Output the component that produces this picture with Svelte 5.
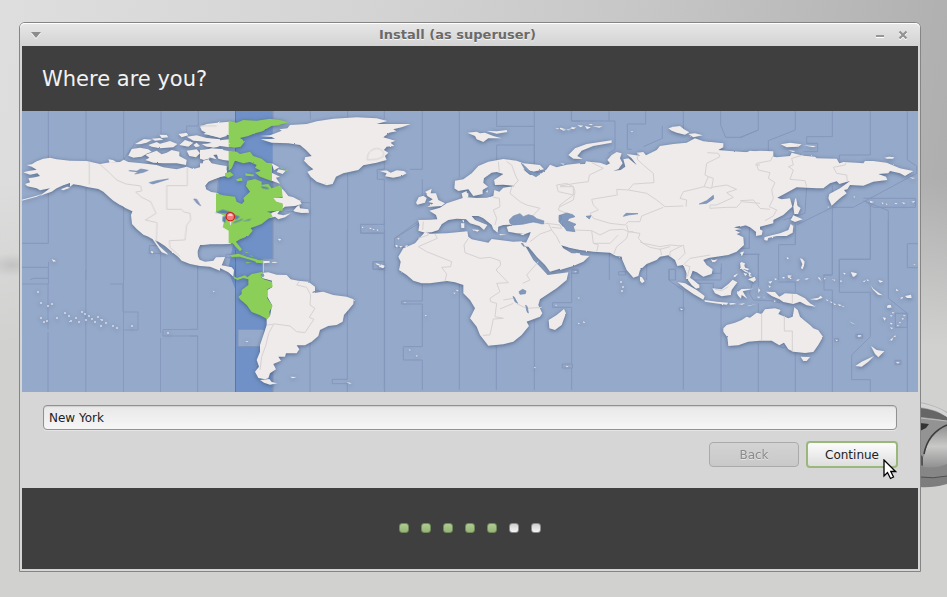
<script>
  let city = $state('New York');
  const steps = 7;
  const current = 5;

  // Map sheets: each has its own origin; shapes are in thirds of a map unit.
  const sheets = [
    {
      x: 20, y: 110,
      land: [
        'M20 165L35 163 50 154 70 146 90 143 110 148 150 152 200 153 240 162 270 157 300 156 311 149 325 156 350 158 385 162 410 165 430 172 470 178 500 170 520 177 545 170 550 152 565 148 575 160 600 165 620 168 620 198 600 200 585 207 565 215 555 228 560 243 580 248 595 250 595 402 570 403 540 405 533 418 532 435 540 452 555 458 580 455 600 452 600 482 570 470 540 468 510 462 485 452 474 440 455 425 435 408 415 395 405 391 420 410 440 428 445 434 425 427 410 405 398 388 385 380 370 374 350 357 336 342 333 315 338 302 325 294 300 285 280 272 268 262 250 245 235 237 205 232 180 226 160 223 150 230 150 219 130 226 110 235 95 245 75 252 60 258 72 248 90 235 60 241 50 235 22 229 15 222 30 217 25 205 45 202 60 198 52 190 30 194 10 187 25 183 50 179 35 170Z',
        'M5 269L50 257 72 250 50 260 5 272Z',
        'M325 137L335 117 360 113 385 118 395 125 380 131 365 140 340 143Z',
        'M376 150L388 143 376 134 410 122 425 133 440 128 455 120 478 125 478 138 500 150 498 165 470 160 430 160 400 158Z',
        'M345 102L372 87 396 89 380 98 360 103Z', 'M385 105L410 96 420 101 450 93 472 102 460 112 420 115 395 110Z',
        'M418 74L440 75 445 82 425 84ZM395 86L420 84 430 89 405 92Z', 'M475 72L500 68 505 76 485 82ZM478 105L495 90 520 98 505 110ZM520 105L530 98 540 108 528 112Z',
        'M500 122L530 118 540 130 528 142 508 138Z', 'M500 80L530 76 560 84 600 88 600 98 560 95 520 92Z', 'M543 60L570 48 620 38 620 78 600 84 570 76Z', 'M545 122L575 115 610 118 605 132 580 135 590 148 565 142Z', 'M545 102L580 100 602 106 590 112 560 110Z',
        'M95 448l8 2 5 4-8 1zM80 442l5 1zM68 439l4 1zM393 423l7 2-1 5-5-1z', 'M245 238l12 3 14 12 10 12-12-4-12-12zM300 283l25 6 20 12-5 4-24-11z', 'M265 148l14 2 10 6-20 3z', 'M122 238l20-8 8 3-20 8z'
      ],
      border: ['M208 155V223', 'M240 163L270 190 290 210 318 222 362 228 365 243 347 246 365 262 392 275 408 310 376 330 411 338 409 395', 'M502 172V227H440V298H484L492 306 510 310 512 330 500 345 495 390 448 392 450 412 480 440'],
      lake: ['M327 182L350 184 362 177 384 181 370 187 345 192 355 185Z', 'M388 218L410 212 445 207 420 215 398 222Z', 'M521 267L530 268 542 288 530 279Z'],
      zone: ['M85 0V145', 'M85 250V400H0', 'M0 472H85V510', 'M198 0V150', 'M198 233V510', 'M311 148V0', 'M311 290V510', 'M345 100L311 149', 'M423 0V74', 'M535 0V48H500V75', 'M422 425V510', 'M388 407V430H420', 'M388 407H420', 'M533 460V510', 'M30 510L40 505H85']
    },
    {
      x: 200, y: 110,
      land: [
        'M0 160L20 161 40 168 60 172 82 182 76 196 55 203 30 210 15 225 18 238 35 247 50 248 50 305 92 310 92 402 60 403 30 402 0 405Z',
        'M0 50L20 42 50 38 88 35 88 76 70 72 60 82 30 76 10 72 25 64 5 60Z', 'M0 88L30 86 45 92 88 88 88 112 60 108 40 113 10 104 35 99Z', 'M50 132L70 120 88 124 88 152 70 150 55 146Z', 'M0 120L25 118 38 126 20 132 30 145 12 150 0 146Z',
        'M180 78L210 76 230 68 245 62 238 58 262 55 270 45 320 42 350 34 400 26 470 22 530 25 562 33 530 42 590 42 632 42 605 52 580 58 590 64 568 68 550 82 586 92 572 98 583 108 560 110 552 120 565 128 555 138 560 150 530 158 490 166 475 180 430 190 408 200 398 222 380 226 350 215 332 200 322 185 340 178 325 166 312 152 315 142 335 138 318 120 300 105 265 100 215 98 182 88 225 86 215 81Z',
        'M540 183L560 181 552 176 572 188 590 181 612 183 620 190 605 198 580 203 555 199 560 190Z',
        'M218 262L248 264 236 226 255 245 265 258 280 262 300 272 305 282 285 288 255 290 245 298 248 285 235 278 220 272Z', 'M280 302L290 290 298 285 300 295 325 298 327 308 305 309 285 305Z', 'M215 308L240 300 232 312 250 316 272 310 255 322 235 328 225 320 205 325Z',
        'M215 160L238 172 222 181ZM235 178L257 182 248 192 230 186ZM215 188L240 200 228 203 240 221 215 212Z',
        'M188 453L208 453 210 458 190 460ZM215 456L233 457 218 459Z', 'M235 386l7 1 0 4-6-1zM485 350l6 1-4 4zM507 353l9 1-5 4zM517 356l8 2-5 2zM530 358l6 2-4 3zM592 384l7 1-4 4zM586 405l6 0 1 7-4 0zM598 408l10 1-6 4zM614 408l10-3-5 7zM528 463l8-2 5 4-7 1zM542 463l12 4-5 7-7-3z'
      ],
      pick: [
        'M86 32L110 38 130 30 170 32 210 26 240 30 266 37 236 45 250 45 215 48 200 56 188 64 165 70 145 78 120 84 135 94 122 110 105 113 86 110Z',
        'M86 122L110 125 120 132 150 125 160 138 185 146 200 158 216 160 216 214 200 208 180 200 165 188 182 182 165 173 170 165 150 156 130 160 105 152 95 175 86 182Z',
        'M75 190L90 185 101 195 85 204 75 199ZM108 208L125 203 128 212 112 214ZM135 190l28 4-4 5-22-2z',
        'M48 250L70 256 105 260 110 275 125 282 133 274 130 264 150 245 138 228 142 212 165 207 185 215 185 224 205 222 215 235 232 228 245 230 248 262 220 264 230 276 248 280 248 302 230 302 200 305 212 308 218 320 205 326 185 342 170 348 152 354 158 362 145 378 120 388 108 395 118 408 126 418 120 424 108 412 98 400 86 400 86 362 68 352 72 336 74 318 48 306Z',
        'M90 436L115 431 140 440 165 446 186 454 180 459 150 449 120 440 95 441ZM138 456L156 458 140 460ZM165 452L188 450 188 460 168 458ZM240 172l12 2-8 2zM258 178l8 2-6 4z'
      ],
      border: ['M502 150Q500 120 530 115 555 118 550 140L530 148Z', 'M0 48H50'],
      deep: ['M45 308L68 299 95 306 80 311 60 309Z', 'M68 318L79 320 76 338 67 334Z', 'M98 312L120 320 108 330 102 322Z', 'M98 338L130 325 124 331 104 339Z', 'M126 334L154 326 148 332Z', 'M183 228l20 4 4 6-20-3z'],
      zone: ['M331 0V28', 'M331 205V510', 'M443 0V22', 'M443 190V510', 'M553 0V25', 'M553 110V178H532V208H553V343H482V369H553V510', 'M218 0V28', 'M218 217V447H188L192 488', 'M305 278H330', 'M240 290H300V305H260', 'M584 385L660 338', 'M584 385V412H625', 'M553 455H519V478H553', 'M78 433H130V443H78Z', 'M76 188L55 205V245']
    },
    {
      x: 190, y: 230,
      land: [
        'M0 0L117 0 117 42 95 41 60 40 30 45 22 65 25 88 45 95 70 92 78 82 105 81 98 100 95 106 125 112 132 120 130 140 115 127 85 112 50 107 0 98Z',
        'M220 128L235 127 260 134 290 135 302 148 325 152 355 155 375 170 375 188 400 185 430 195 470 200 491 208 490 222 475 240 462 255 458 275 440 285 415 288 390 300 385 318 365 335 345 346 320 346 328 358 320 370 288 370 285 380 265 380 273 392 250 402 258 418 240 430 235 445 225 448 205 444 195 425 207 410 200 390 210 365 210 345 222 310 230 285 230 265 240 258 246 225 232 200 232 180 246 172 246 152 218 145 208 135Z',
        'M210 450L238 447 245 456 262 460 240 464 222 458Z',
        'M265 26l7 2-4 4zM68 182l7 2-4 2zM300 440l20 1-12 4zM470 456l16 4-8 1zM556 100l8 0-3 3zM566 106l18 2-4 6-12-3zM249 95l14 1-8 3zM280 105l3 2zM297 120l3 2zM166 333l10 1-5 3z'
      ],
      pick: [
        'M130 137L140 144 165 136 172 142 185 132 215 126 221 129 212 140 222 148 246 155 248 170 232 178 232 205 248 228 238 245 240 258 232 268 210 256 185 246 170 225 150 208 145 200 155 192 155 180 175 165 175 148 160 144 142 150 132 145Z',
        'M165 65l12 4-8 0zM178 75l15 5-10-1z'
      ],
      border: ['M232 285L255 282 300 288 320 305 345 308 360 285 372 268 358 262 375 235 360 225 362 195 350 172 320 165 328 154', 'M250 284L236 310 228 345 215 380 210 420', 'M220 92V128'],
      lake: ['M213 134l7-2 2 6-6 3z', 'M368 187l16-7 5 4-14 2z'],
      zone: ['M0 298H23V110', 'M0 318H23V495', 'M248 390V495', 'M360 155V165', 'M360 335V495', 'M472 240V448H427V461H472V495', 'M584 0V10H512V0', 'M584 10V495', 'M584 95H549V118H584', 'M472 0V200', 'M360 0V155', 'M193 398l8 6-6 12 8 8-10 8 14 14 20 8 20 8']
    },
    {
      x: 360, y: 110,
      land: [
        'M175 330L210 329 232 328 228 315 208 302 240 293 260 280 290 270 308 264 305 250 320 243 322 262 350 264 380 263 400 258 403 240 418 245 430 233 465 228 430 224 405 225 402 210 430 192 410 186 395 188 372 205 370 218 384 230 368 240 368 252 340 258 325 238 295 243 283 235 285 212 310 208 335 190 355 168 385 155 430 147 470 152 490 160 540 165 552 178 520 185 490 178 510 195 545 190 560 178 570 164 590 172 620 164 660 160 660 418 625 412 600 400 610 415 635 430 660 430 660 457 620 470 570 485 555 465 530 440 505 410 485 401 498 398 508 378 512 366 495 372 470 370 445 365 440 350 460 345 500 342 450 344 430 345 415 350 413 368 400 358 395 345 370 325 355 318 335 318 345 330 382 345 372 360 358 348 330 340 318 328 290 326 265 330 245 343 235 360 215 367 195 368 175 362 178 345Z',
        'M196 245L215 236 212 250 228 250 235 270 255 280 245 288 202 291 220 280 205 276 218 268 202 258Z', 'M168 278L176 262 190 257 200 264 195 278 172 284Z',
        'M322 68L350 65 360 70 375 68 400 78 425 85 400 85 385 85 370 96 350 88 345 78Z', 'M378 62L410 64 440 60 442 66 410 71Z',
        'M335 358L358 360 352 365ZM303 340h10v14h-9zM306 331h6v7zM418 372l22 2-20 2zM480 373l18-4-8 7zM313 248l12 2 0 12-8 0z', 'M450 57l10 2zM478 57l14 2zM585 53l14 3-6 2zM600 56l20 3-10 3zM626 56l24-4-10 5zM385 118l3 0zM190 211l4 2zM229 224l5 1zM173 145l9 1z', 'M378 245l6-6-2 9z'
      ],
      lake: ['M450 340L448 330 460 318 480 311 490 320 505 314 520 318 530 326 552 333 550 342 520 336 490 342 460 345Z', 'M484 160l14 24 30 16 12-8-30-8-18-18z'],
      border: ['M415 155L418 185', 'M440 155L455 165 468 200 475 212 455 232 450 250 480 275 500 285 540 295 520 315', 'M400 262L418 265 420 290 400 300 410 325 405 345', 'M190 335L188 360', 'M200 365L205 375 175 385', 'M540 342L565 340 575 360 540 372 510 395', 'M590 225L620 220 640 230 640 255 595 245Z', 'M640 255L600 285 595 300 620 310', 'M575 360L590 380 600 400', 'M560 340L600 345 605 355 575 352'],
      zone: ['M298 0V202', 'M187 0V178H150', 'M187 208V260', 'M410 0V49H523', 'M410 150V105H523V165', 'M523 0V165', 'M635 0V33H660', 'M104 385L172 335', 'M655 487V478H635', 'M400 225L480 227']
    },
    {
      x: 380, y: 220,
      land: [
        'M105 70L118 55 135 36 150 41 200 40 262 34 265 50 275 58 325 68 335 57 400 65 425 64 440 85 460 120 480 140 503 165 565 157 560 180 530 205 480 238 475 255 487 280 480 290 440 305 447 318 425 345 400 365 370 373 325 377 300 345 290 320 270 295 285 265 270 240 250 220 250 195 225 187 200 183 150 190 125 190 100 182 80 165 57 150 62 125 55 110 70 85Z',
        'M424 65L440 68 443 82 436 78Z', 'M552 267L558 280 545 315 525 330 508 325 506 300 530 285Z',
        'M228 209l8 2-5 3zM220 218l7 0-4 4zM71 247l8 1-4 2zM134 285l7 1-4 3zM86 388l7 2-4 2zM107 406l7 1-4 3zM461 441l8 2-5 2zM557 437l9 2-5 3zM526 254l6 1-4 3zM593 232l7 2-4 2zM593 308l7 2-4 3zM609 304l7 3-5 3zM583 154l8 1-5 2z'
      ],
      lake: ['M417 215L428 208 438 213 436 221 420 223Z', 'M399 229L403 232 413 250 405 245Z', 'M437 255l5 6 3 18-4-4z', 'M424 70l4 6 5 4-4-9z'],
      border: ['M165 42L172 55 115 80 140 95 215 125 212 140 185 142 200 162 195 184', 'M265 55L252 75 255 98 300 115 330 112 360 122 362 135 348 150 385 188 350 190 360 215 330 235 332 245 350 250 345 290 370 295 340 297 330 345 308 346', 'M475 125L440 165 450 180 428 190', 'M370 240L400 235', 'M360 267L400 250', 'M412 252L440 265 485 262', 'M440 265L445 280'],
      zone: ['M13 0V510', 'M127 190V243H65V252H127V380H70V420H127V510', 'M238 190V510', 'M349 378V510', 'M463 300V510', 'M575 150V248H518V262H575V432', 'M547 432H577V444H547Z', 'M575 444V510', 'M580 150H595V160H575']
    },
    {
      x: 560, y: 110,
      land: [
        'M0 170L30 168 50 163 75 162 78 154 95 156 120 158 140 165 150 160 142 150 155 135 170 126 185 130 180 145 188 160 175 178 160 182 182 180 196 170 190 148 205 145 230 165 215 145 200 132 240 137 230 128 250 126 258 136 290 120 300 108 340 102 380 98 405 85 430 94 490 100 490 112 475 120 500 122 560 127 600 122 640 124 640 340 600 350 600 375 570 352 555 345 522 352 545 358 525 360 540 368 530 372 550 382 552 405 530 425 505 435 470 440 445 444 430 450 440 465 458 478 455 492 430 500 410 487 398 482 388 510 378 508 380 490 370 465 352 468 345 450 325 436 300 440 290 450 260 462 240 480 235 498 220 503 200 480 187 450 185 440 168 438 150 428 100 425 60 420 35 415 0 405Z',
        'M0 430L20 430 40 440 50 428 65 436 88 438 70 455 40 468 0 480Z',
        'M25 135L45 115 80 102 155 91 155 98 100 108 65 122 52 138 68 147 40 146Z', 'M325 55L340 50 360 48 372 58 388 67 375 74 350 68 335 62Z', 'M385 72L405 70 428 76 400 82Z',
        'M0 53l15 2-15 3zM32 50l14 3-6 5zM52 45l18 2-8 5zM75 48l18 4-12 6zM85 42l14 0-6 4zM98 49l30 0-10 4zM20 57l14 3-10 1zM0 160l14 1-4 3zM212 64l8 0-4 3zM235 51l8 1z', 'M240 500l6 2 8 12-8 6-6-8zM545 425l6 3-8 10zM452 448l14 4-8 5z', 'M540 458l8 0 8 15 12 4-5 4-20-6zM563 485l10 5-4 8zM520 498l14-8-8 10zM350 490l1 10z'
      ],
      lake: ['M0 316L20 309 38 314 45 320 28 325 22 332 48 343 40 350 45 365 20 362 8 345Z', 'M-3 316H3V335L10 350 -3 335Z', 'M418 282L440 272 460 256 461 266 440 280Z', 'M190 319L198 310 234 311 205 315Z', 'M78 319l15-2-5 10z'],
      border: ['M95 158L130 175 88 195 85 215 45 220 0 228', 'M0 230L40 230 45 245 40 270 0 290', 'M235 130L232 148 250 165 280 190 282 218 220 222 205 240 170 238 172 255 95 268 100 285 115 300 90 310 100 325 150 340 195 345 205 335 240 335 245 318 310 292', 'M205 240L260 250 290 270 315 290 370 288', 'M442 128L475 130 480 140 440 160 435 195 445 200 432 230 400 238 370 245 360 265 380 270 378 290', 'M432 230L455 235 460 205 445 200', 'M455 232L500 225 530 238 500 248 520 262 470 285 450 285 450 295 500 292 530 292 545 275 600 280', 'M40 360L95 362 120 375 150 360 190 358 205 365 220 365', 'M95 362L100 400 115 405 110 425', 'M100 400L150 400 175 375', 'M200 345L205 365 240 370 235 385 250 400 300 410 330 405 365 408', 'M160 435L170 410 200 385 205 365', 'M300 415L305 435', 'M330 440L330 425 370 405 375 430 355 450', 'M240 395L270 412 300 418 330 410', 'M370 465L390 445 420 440 450 435', 'M375 465L390 470 382 500', 'M585 165H600'],
      zone: ['M34 0V33H165V118L145 130', 'M147 0V33', 'M257 0V42H202V118H215', 'M250 110L307 85V48', 'M370 0V60', 'M482 0V45L497 82H540L595 60', 'M568 350V415H540', 'M540 433H600', 'M148 428V510', 'M35 480H52V490H35ZM176 485H197V495H176Z', 'M328 510V478H346V510', 'M260 465V510', 'M484 460V490H430']
    },
    {
      x: 740, y: 110,
      land: [
        'M0 128L20 127 30 122 65 125 75 147 92 138 110 142 150 138 155 128 190 137 225 140 230 145 290 146 298 160 310 156 350 158 370 160 375 153 400 153 440 158 480 175 520 183 505 192 495 198 480 190 450 183 445 190 415 192 438 200 442 210 400 215 370 227 330 225 322 238 312 240 320 250 300 265 275 287 265 265 268 252 300 235 330 213 298 222 290 214 270 220 250 235 230 235 170 232 140 248 112 263 125 268 150 265 157 290 130 315 100 330 75 335 45 350 68 362 65 375 48 378 48 362 35 350 20 345 0 350Z',
        'M165 268L168 263 173 288 182 294 174 312 163 312 160 290Z', 'M160 316L188 328 165 336 152 330Z', 'M152 342L160 348 158 368 140 378 110 378 85 384 82 392 73 390 73 382 95 376 120 370 145 360Z',
        'M122 103L150 98 185 103 175 110 140 112ZM190 106L228 108 220 112ZM145 121l22 2-8 3zM433 143l14-3 16 2-4 4-18 0z', 'M389 272l13 4-10 3zM425 277l6 2-4 4zM437 280l6 3-4 2zM463 279l10 0-5 4zM485 277l12 2-6 3zM514 275l12-3-6 6zM508 202l18 2-8 2zM262 290l6 0-3 3zM340 259l6 1-3 3zM190 328l5-2zM200 323l5-2zM210 319l5-2z', 'M180 445l7 2 7 8-2 12-5 12-4-6 4-10zM140 443l6 1-3 3zM128 503l6 1zM142 497l12 4-8 4zM234 502l8 2-4 3zM310 489l6 1-3 4zM333 488l18 4-8 8zM520 462l7 2-4 2zM160 507l8 1zM250 508l10 2zM280 502l6 4z'
      ],
      border: ['M98 138L92 152 50 160 55 180 90 188 85 205 105 218 95 240 100 265 88 290 110 300 100 318 75 332', 'M0 272L40 270 60 295 90 298', 'M190 135L155 145 160 165 145 170 160 180 150 208 195 212 200 230', 'M280 172L315 165 318 158', 'M280 172L290 190 320 195 322 215'],
      zone: ['M55 0V60L0 84', 'M166 0V60L85 92V138', 'M277 0V80H200V100H233V125H190', 'M391 0V135H298V148', 'M502 0V150L530 168V190L340 292H277L170 345', 'M277 228V495H250', 'M370 272L445 302V510', 'M526 265V292H400L375 272M370 265H526', 'M391 285V448H298V510', 'M166 380V404H116V510', 'M28 380V415H0', 'M55 510V433H0', 'M534 401H502V473H534', 'M200 225L195 310 130 330', 'M166 268V318']
    },
    {
      x: 660, y: 220,
      land: [
        'M190 325L200 315 225 308 245 300 260 290 270 293 290 278 305 282 315 268 345 265 362 270 355 282 385 295 398 290 403 262 413 270 420 290 435 303 450 315 460 325 475 331 489 350 475 375 460 396 435 399 400 395 385 388 372 368 358 376 335 362 300 362 265 365 235 376 205 378 202 352 190 335Z',
        'M422 410L450 411 440 423 430 423Z', 'M633 378L650 390 673 394 655 412 645 402Z', 'M642 408L625 425 605 440 586 438 605 425Z',
        'M318 215L345 216 358 230 375 220 410 222 435 235 450 250 467 260 440 256 420 245 400 252 370 246 358 238 335 228Z', 'M450 238L475 233 482 227 488 233 470 240Z',
        'M157 205L185 208 205 192 218 179 232 187 215 210 212 225 185 229 165 220Z', 'M52 186L75 190 110 210 134 228 130 239 100 222 75 205Z', 'M133 240L170 245 205 248 200 254 165 250 135 245Z', 'M230 218L245 207 280 206 248 214 262 236 245 225 243 236 235 228Z', 'M78 140L88 150 86 170 100 180 118 195 118 203 108 206 95 195 82 178Z',
        'M243 126L255 130 250 148 265 156 275 162 255 155 242 145ZM250 158l12 4-6 6zM265 165l12 3-7 3zM264 178l20-8 4 10-8 6zM240 98l12-4-6 14zM155 122l18-4-9 9z', 'M220 170l14-9-10 10zM208 250l12-1 10 3-20 2zM235 252l20-2-8 4zM262 258l26-6-22 7zM295 205l6 6-6 8zM325 185l12-2-6 8zM325 196l8 4-5 3zM290 230l12 0-6 4zM310 230l8 2-5 2zM340 241l8 2-5 3z',
        'M498 238l8 3-5 2zM510 244l8 3-5 2zM520 250l9 3-6 2zM534 252l12 4-8 2zM546 258l8 2-5 2zM568 304l20 10-12-4zM585 282l8 4zM594 346l10 0-3 4-7 0zM526 359l8 1-4 4zM60 266l9 1-4 4zM708 426l10 1-4 4z', 'M343 175l8 2-5 4zM366 171l8 0-2 5zM382 165l14 2-6 4zM388 173l8 2-5 3zM408 180l12-3-7 6zM432 177l15-3-6 5zM473 172l6 2 6 10-7-6zM492 173l5 2-3 4zM520 178l6 2-4 3zM540 181l7 2-5 4zM550 158l8 2-5 3zM573 156l18 4-12 12zM608 184l10-3-5 5zM620 178l8 3-6 2zM655 180l15 4-10 4zM632 196l8 10 16 12 12 8-14-2-16-16zM708 206l8 6-7 1zM720 234l10-4-4 7zM735 228l18-4 2 10-14 0zM742 252l12 4zM680 258l8-4 8 8-10 2zM668 292l10 2-4 8zM690 285l8 2-5 3zM695 277l8 0-4 4zM730 284l8 4-7 1zM725 294l8 2-6 3zM718 305l6 4-6 1zM712 314l6 4-6 1zM690 308l8 2-5 4zM690 322l10 2-6 3zM690 360l10-8-4 10zM700 350l6-4 1 5zM380 112l7 2-4 4z'
      ],
      border: ['M305 280V361', 'M373 288V333H397V395', 'M397 222V250', 'M165 208L185 212 205 200'],
      lake: ['M358 378l14-6 4 10-10 2z'],
      zone: ['M26 148V180L70 212V510', 'M26 148H47V180H26', 'M183 145V180H90', 'M183 255V525', 'M295 250V275', 'M295 370V525', 'M406 72V10', 'M406 400V525', 'M517 0V165H492V210H517V525', 'M355 186H406V215', 'M631 118H538V217H631V350L575 405V479H631V525', 'M685 235L742 280V525', 'M706 280H742V322H706Z', 'M685 0V235', 'M588 343H608V354H588ZM705 421H723V433H705ZM58 263H72V272H58ZM524 356H536V364H524Z', 'M280 180L268 220 280 240 330 242 360 248', 'M103 190H160V205', 'M295 103V200', 'M631 0V118']
    }
  ];

  // Small Polynesian islands
  const specks = [[41,303],[48,306],[52,304],[41,318],[44,322],[47,321],[65,313],[69,316],[71,321],[76,318],[82,312],[85,314],[89,316],[86,320],[92,319],[95,322],[98,317],[102,320],[106,323],[101,326],[113,326],[117,328],[132,326],[38,292],[57,318],[79,322],[168,333],[621,282],[623,287],[622,291]];
</script>

<main class="desktop">
  <svg class="emblem" viewBox="0 0 27 90" aria-hidden="true">
    <defs>
      <linearGradient id="metal" x2="0" y2="1"><stop stop-color="#b4b4b4" /><stop offset=".5" stop-color="#858585" /><stop offset="1" stop-color="#7c7c7c" /></linearGradient>
      <linearGradient id="shine" x2="0" y2="1"><stop stop-color="#7a7a7a" /><stop offset=".55" stop-color="#c9c9c8" /><stop offset="1" stop-color="#8a8a8a" /></linearGradient>
    </defs>
    <path d="M0 2Q15 5 27 12V84Q12 88 0 87Z" fill="url(#metal)" />
    <path d="M0 8Q14 9 27 17V21L17 19 0 17Z" fill="#666" />
    <path d="M0 3Q17 6 27 13V17Q16 9 0 7Z" fill="#d4d4d4" />
    <path d="M0 17L27 21V66Q12 71 0 70Z" fill="url(#shine)" />
    <path d="M0 17L27 21V26Q8 35 4 56L0 62Z" fill="#939393" />
    <path d="M0 18L27 21" fill="none" stroke="#bdbdbd" />
    <path d="M0 23L9 24 6 28 0 31Z" fill="#333" />
    <path d="M27 25Q8 33 4 54" fill="none" stroke="#3b3b3b" stroke-width="1.500" />
    <path d="M0 54L3 57V66L0 65Z" fill="#565656" />
    <path d="M0 66Q13 70 27 64V76Q13 79 0 77Z" fill="#868686" />
    <path d="M0 77Q13 79 27 76" fill="none" stroke="#505050" />
  </svg>

  <section class="window" aria-label="Install">
    <header class="titlebar">
      <div class="side left">
        <button class="wm" aria-label="Window menu"><svg viewBox="0 0 10 10" width="10" height="10"><path d="M0 3H10L5 9Z" fill="#fff" /><path d="M0 2H10L5 8Z" fill="#8c8c8c" /></svg></button>
      </div>
      <h1>Install (as superuser)</h1>
      <div class="side right">
        <button class="wm" aria-label="Minimize"><svg viewBox="0 0 10 10" width="10" height="10"><path d="M1 7.500H9" stroke="#fff" /><path d="M1 6H9" stroke="#969696" stroke-width="2" /></svg></button>
        <button class="wm" aria-label="Close"><svg viewBox="0 0 10 10" width="10" height="10"><path d="M1.500 2.500L8.500 9.500M8.500 2.500L1.500 9.500" stroke="#fff" stroke-width="2.200" /><path d="M1.500 1.500L8.500 8.500M8.500 1.500L1.500 8.500" stroke="#929292" stroke-width="2.200" /></svg></button>
      </div>
    </header>

    <h2>Where are you?</h2>

    <svg class="map" viewBox="22 111 896 281" role="img" aria-label="Time zone map">
      <defs>
        <filter id="coast" filterUnits="userSpaceOnUse" x="22" y="111" width="896" height="281" color-interpolation-filters="sRGB">
          <feTurbulence type="fractalNoise" baseFrequency=".28" numOctaves="2" seed="4" result="n" />
          <feDisplacementMap in="SourceGraphic" in2="n" scale="1.6" xChannelSelector="R" yChannelSelector="G" result="d" />
          <feDropShadow in="d" dx="0" dy="1" stdDeviation="2" flood-color="#334667" flood-opacity=".65" />
        </filter>
      </defs>
      <rect x="22" y="111" width="896" height="281" fill="#95a9ca" />
      <path d="M235.500 111H272.700V259H263L264 273 272.700 283V392H235.500V290L228 270 235 235 216 212 218 180 229 165 235.500 160Z" fill="#6f91c7" />
      <path d="M235.500 111V160M235.500 250V392M272.700 111V120M272.700 180V259M272.700 360V392" class="zone strong" />
      <path d="M238 329.500H264V346.500H238Z" fill="#95a9ca" stroke="#8095b8" />
      {#each sheets as s}
        <g transform="translate({s.x} {s.y}) scale(.33333)">
          {#each s.zone as d}<path {d} class="zone" />{/each}
        </g>
      {/each}
      <path d="M22 284H48V329.500M48.500 284V262M48 332V392M85.800 270V392M123.500 270V392M160.500 270V333M160.500 338V392M197.500 329.500H163V336H197.500M110 284H123V312H138V330H123" fill="none" stroke="#8799bd" />
      <g filter="url(#coast)">
        {#each sheets as s}
          <g transform="translate({s.x} {s.y}) scale(.33333)">
            {#each s.land as d}<path {d} class="land" />{/each}
          </g>
        {/each}
        {#each sheets as s}
          {#if s.pick}
            <g transform="translate({s.x} {s.y}) scale(.33333)">
              {#each s.pick as d}<path {d} class="pick" />{/each}
            </g>
          {/if}
        {/each}
        {#each specks as [x, y]}<circle cx={x} cy={y} r="1" fill="#d8dbe6" />{/each}
      </g>
      {#each sheets as s}
        <g transform="translate({s.x} {s.y}) scale(.33333)">
          {#each s.border as d}<path {d} class="border" />{/each}
          {#each s.lake ?? [] as d}<path {d} class="lake" />{/each}
          {#each s.deep ?? [] as d}<path {d} fill="#5c7fae" />{/each}
        </g>
      {/each}
      <path d="M229 219.500H232L231 225.500H230Z" fill="#eee" stroke="#999" stroke-width=".4" />
      <circle cx="230.300" cy="216.700" r="4.200" fill="#f47b7b" stroke="#c81e1e" stroke-width="1.200" />
      <path d="M227.800 216Q228 213.500 230.300 213.500T232.800 216Z" fill="#ffd0cd" />
    </svg>

    <form onsubmit={(e) => e.preventDefault()}>
      <input type="text" aria-label="City" bind:value={city} />
      <div class="actions">
        <button type="button" class="back" disabled>Back</button>
        <button type="submit" class="next">Continue
          <svg class="pointer" viewBox="0 0 14 22" width="14" height="22" aria-hidden="true"><path d="M1 1V17L4.500 13.500 7.500 19.500 10.500 18 7.800 12.500H12.500Z" fill="#fff" stroke="#000" stroke-width="1.300" /></svg>
        </button>
      </div>
    </form>

    <footer aria-label="Progress">
      {#each Array(steps) as _, i}<span class="dot" class:done={i < current}></span>{/each}
    </footer>
  </section>
</main>

<style>
  :global(body) { margin: 0; }
  * { box-sizing: border-box; }
  .desktop {
    position: relative;
    min-height: 100vh;
    padding: 22px 26px 25px 19px;
    font-family: "DejaVu Sans", sans-serif;
    background:
      radial-gradient(ellipse 24px 12px at 12px 265px, #c2c2c2, transparent),
      linear-gradient(to bottom, transparent 30%, #d1d1d0 58%),
      linear-gradient(100deg, #dedede 0%, #d4d4d4 35%, #c6c6c6 62%, #a9a9a9 100%);
    overflow: hidden;
  }
  .emblem { position: absolute; right: 0; top: 400px; width: 27px; height: 90px; }
  .window {
    position: relative;
    border: 1px solid #858585;
    border-radius: 6px 6px 0 0;
    padding: 0 2px 2px;
    background: #d6d6d6;
  }
  .titlebar {
    display: flex;
    align-items: center;
    height: 23px;
    margin: 0 -2px;
    padding: 0 2px;
    border-radius: 5px 5px 0 0;
    background: linear-gradient(#e7e7e7, #d3d3d3);
    box-shadow: inset 0 1px #fff;
  }
  h1 {
    flex: 1;
    margin: 0;
    text-align: center;
    font-size: 13px;
    line-height: 20px;
    color: #6a6a6a;
    text-shadow: 0 1px #f5f5f5;
  }
  .side { display: flex; gap: 13px; }
  .left { width: 28px; padding-left: 9px; }
  .right { width: 53px; padding-left: 10px; }
  .wm { width: 10px; height: 10px; padding: 0; border: 0; background: none; }
  .wm svg { display: block; }
  h2 {
    margin: 0;
    padding: 21px 20px 19px;
    background: #3f3f3f;
    color: #f2f2f2;
    font-size: 21px;
    font-weight: 400;
    line-height: 25px;
  }
  .map { display: block; width: 100%; height: auto; }
  .zone { fill: none; stroke: #8598bc; stroke-width: 3; }
  .zone.strong { stroke: #5878ab; stroke-width: 1; }
  .land { fill: #efebeb; }
  .pick { fill: #8bce58; }
  .lake { fill: #8299bd; stroke: #7189ae; stroke-width: 2; }
  .border { fill: none; stroke: #d5d1d2; stroke-width: 3; }
  form { padding: 13px 20px 20px 21px; }
  input {
    display: block;
    width: calc(100% - 1px);
    height: 25px;
    padding: 0 5px;
    border: 1px solid #919191;
    border-radius: 4px;
    background: linear-gradient(#e8e8e8, #f6f6f6);
    box-shadow: inset 0 1px 1px #cfcfcf, 0 1px #e6e6e6;
    color: #222;
    font: 12px "DejaVu Sans", sans-serif;
  }
  .actions { display: flex; justify-content: flex-end; align-items: center; gap: 7px; margin-top: 11px; }
  .actions button { position: relative; padding: 0; border-radius: 4px; font: 12px "DejaVu Sans", sans-serif; }
  .back {
    width: 90px;
    height: 25px;
    border: 1px solid #aaa;
    background: linear-gradient(#d3d3d3, #c9c9c9);
    color: #8b8b8b;
    text-shadow: 0 1px #e4e4e4;
  }
  .next {
    width: 92px;
    height: 27px;
    border: 2px solid #9ab87c;
    background: linear-gradient(#fcfcfc, #dedede);
    color: #222;
  }
  .pointer { position: absolute; left: 75px; top: 16px; }
  footer {
    display: flex;
    justify-content: center;
    align-items: center;
    gap: 12px;
    height: 81px;
    padding-bottom: 2px;
    background: #3f3f3f;
  }
  .dot {
    width: 10px;
    height: 10px;
    border: 1px solid #8b8b8b;
    border-radius: 3px;
    background: linear-gradient(#cfcfcf, #f5f5f5);
  }
  .dot.done { border-color: #708a58; background: linear-gradient(#aecb91, #96b578); }
</style>
